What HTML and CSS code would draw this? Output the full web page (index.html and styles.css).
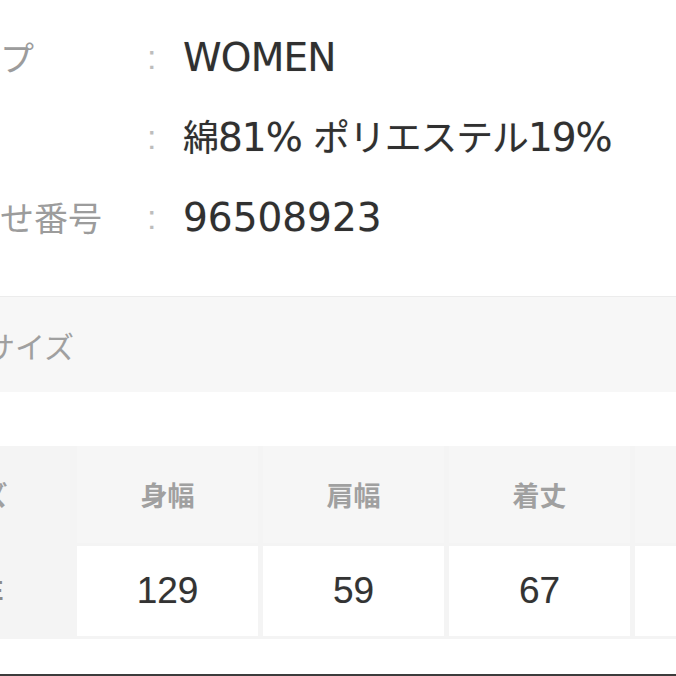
FILE: index.html
```
<!DOCTYPE html>
<html lang="ja">
<head>
<meta charset="utf-8">
<title>商品情報</title>
<link rel="stylesheet" href="styles.css">
</head>
<body>
<div class="page">
  <dl class="specs">
    <div class="spec-row">
      <dt class="spec-label">性別・タイプ</dt>
      <dd class="spec-colon">:</dd>
      <dd class="spec-value spec-value-word">WOMEN</dd>
    </div>
    <div class="spec-row">
      <dt class="spec-label">素材</dt>
      <dd class="spec-colon">:</dd>
      <dd class="spec-value spec-value-material"><span class="kanji">綿</span>81% <span class="kana">ポリエステル</span>19%</dd>
    </div>
    <div class="spec-row">
      <dt class="spec-label">お問い合わせ番号</dt>
      <dd class="spec-colon">:</dd>
      <dd class="spec-value">96508923</dd>
    </div>
  </dl>

  <div class="section-band">
    <h2 class="section-title">サイズ</h2>
  </div>

  <div class="size-table">
    <div class="cell head-cell label-cell">サイズ</div>
    <div class="cell head-cell">身幅</div>
    <div class="cell head-cell">肩幅</div>
    <div class="cell head-cell">着丈</div>
    <div class="cell head-cell">袖丈</div>
    <div class="cell body-label label-cell">FREE</div>
    <div class="cell body-cell">129</div>
    <div class="cell body-cell">59</div>
    <div class="cell body-cell">67</div>
    <div class="cell body-cell">22</div>
  </div>

  <div class="footer-line"></div>
</div>
</body>
</html>
```

FILE: styles.css
```
html, body {
  margin: 0;
  padding: 0;
  background: #ffffff;
}

body {
  width: 676px;
  height: 676px;
  overflow: hidden;
  font-family: "Liberation Sans", "Noto Sans CJK JP", sans-serif;
}

.page {
  margin-left: -170px;
  width: 1100px;
}

.specs {
  margin: 0;
  padding-top: 17px;
}

.spec-row {
  display: grid;
  grid-template-columns: 317px 36px auto;
  height: 80px;
  align-items: center;
}

.spec-label {
  margin: 0;
  font-family: "Noto Sans CJK JP", sans-serif;
  font-size: 34px;
  line-height: 1;
  color: #9c9c9c;
  white-space: nowrap;
}

.spec-colon {
  margin: 0;
  font-size: 34px;
  line-height: 1;
  color: #bdbdbd;
}

.spec-value {
  margin: 0;
  font-family: "DejaVu Sans", "Noto Sans CJK JP", sans-serif;
  font-size: 39px;
  line-height: 1;
  color: #303030;
  white-space: nowrap;
  text-shadow: 0 0 1px rgba(0, 0, 0, 0.25);
}

.spec-value-word {
  letter-spacing: -0.8px;
}

.spec-value-material {
  letter-spacing: -1px;
}

.kanji {
  font-family: "Noto Sans CJK JP", sans-serif;
  font-size: 36px;
  letter-spacing: -1px;
}

.kana {
  font-family: "Noto Sans CJK JP", sans-serif;
  font-size: 36.8px;
}

.section-band {
  margin-top: 39px;
  height: 96px;
  border-top: 1px solid #ececec;
  background: #f7f7f7;
  display: flex;
  align-items: center;
  padding-left: 155px;
  box-sizing: border-box;
}

.section-title {
  margin: 0;
  font-family: "Noto Sans CJK JP", sans-serif;
  font-weight: normal;
  font-size: 30px;
  line-height: 1;
  color: #a0a0a0;
}

.size-table {
  margin-top: 54px;
  margin-left: 33px;
  display: grid;
  grid-template-columns: 209px repeat(4, 181px);
  grid-template-rows: 97px 90px;
  column-gap: 5px;
  row-gap: 3px;
  padding-bottom: 3px;
  background: #f4f4f4;
  width: max-content;
}

.cell {
  display: flex;
  align-items: center;
  justify-content: center;
}

.head-cell {
  background: #f6f6f6;
  font-family: "Noto Sans CJK JP", sans-serif;
  font-weight: bold;
  font-size: 27px;
  color: #a0a0a0;
}

.label-cell {
  background: #f4f4f4;
}

.body-label {
  font-family: "Liberation Sans", sans-serif;
  font-size: 27px;
  font-weight: bold;
  color: #8a8a8a;
}

.body-cell {
  background: #ffffff;
  font-family: "Liberation Sans", sans-serif;
  font-size: 37px;
  color: #333333;
  text-shadow: 0 0 1px rgba(0, 0, 0, 0.2);
}

.footer-line {
  margin-top: 35px;
  border-top: 2px solid #3c3c3c;
}
```
